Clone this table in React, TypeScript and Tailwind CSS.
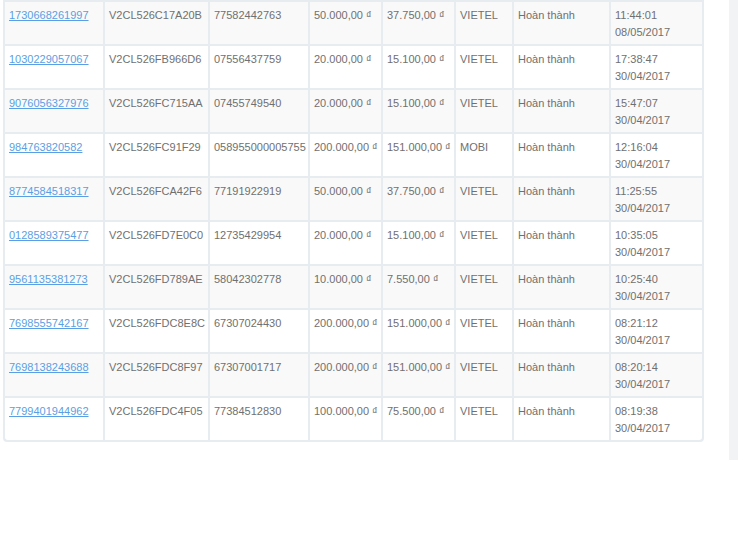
const rows = [
  ["1730668261997", "V2CL526C17A20B", "77582442763", "50.000,00", "37.750,00", "VIETEL", "11:44:01", "08/05/2017"],
  ["1030229057067", "V2CL526FB966D6", "07556437759", "20.000,00", "15.100,00", "VIETEL", "17:38:47", "30/04/2017"],
  ["9076056327976", "V2CL526FC715AA", "07455749540", "20.000,00", "15.100,00", "VIETEL", "15:47:07", "30/04/2017"],
  ["984763820582", "V2CL526FC91F29", "058955000005755", "200.000,00", "151.000,00", "MOBI", "12:16:04", "30/04/2017"],
  ["8774584518317", "V2CL526FCA42F6", "77191922919", "50.000,00", "37.750,00", "VIETEL", "11:25:55", "30/04/2017"],
  ["0128589375477", "V2CL526FD7E0C0", "12735429954", "20.000,00", "15.100,00", "VIETEL", "10:35:05", "30/04/2017"],
  ["9561135381273", "V2CL526FD789AE", "58042302778", "10.000,00", "7.550,00", "VIETEL", "10:25:40", "30/04/2017"],
  ["7698555742167", "V2CL526FDC8E8C", "67307024430", "200.000,00", "151.000,00", "VIETEL", "08:21:12", "30/04/2017"],
  ["7698138243688", "V2CL526FDC8F97", "67307001717", "200.000,00", "151.000,00", "VIETEL", "08:20:14", "30/04/2017"],
  ["7799401944962", "V2CL526FDC4F05", "77384512830", "100.000,00", "75.500,00", "VIETEL", "08:19:38", "30/04/2017"],
];

const cell = "pl-[4px] pr-1 pt-[5px] h-[42px] overflow-hidden whitespace-nowrap";

export default function App() {
  return (
    <div className="flex w-[738px] h-[544px] bg-white font-['Liberation_Sans',Arial,sans-serif] text-[11px] leading-[17px] text-[#707070]">
      <div className="ml-[3px] w-[701px] self-start">
        <div className="grid grid-cols-[98px_103px_98px_71px_71px_56px_95px_91px] gap-[2px] p-[2px] bg-[#e7ecf1] rounded-b-[4px]">
          {rows.map((r, i) => {
            const bg = i % 2 === 0 ? "bg-[#f9f9f9]" : "bg-white";
            const last = i === rows.length - 1;
            return [
              <div key={i + "a"} className={`${cell} ${bg} ${last ? "rounded-bl-[3px]" : ""}`}>
                <a href="#" className="text-[#5a9fe4] underline">{r[0]}</a>
              </div>,
              <div key={i + "b"} className={`${cell} ${bg}`}>{r[1]}</div>,
              <div key={i + "c"} className={`${cell} ${bg}`}>{r[2]}</div>,
              <div key={i + "d"} className={`${cell} ${bg}`}>{r[3]} ₫</div>,
              <div key={i + "e"} className={`${cell} ${bg}`}>{r[4]} ₫</div>,
              <div key={i + "f"} className={`${cell} ${bg}`}>{r[5]}</div>,
              <div key={i + "g"} className={`${cell} ${bg}`}>Hoàn thành</div>,
              <div key={i + "h"} className={`${cell} ${bg} ${last ? "rounded-br-[3px]" : ""}`}>
                <div>{r[6]}</div>
                <div>{r[7]}</div>
              </div>,
            ];
          })}
        </div>
      </div>
      <div className="ml-[25px] w-[9px] h-[460px] bg-[#f1f3f5]" />
    </div>
  );
}
